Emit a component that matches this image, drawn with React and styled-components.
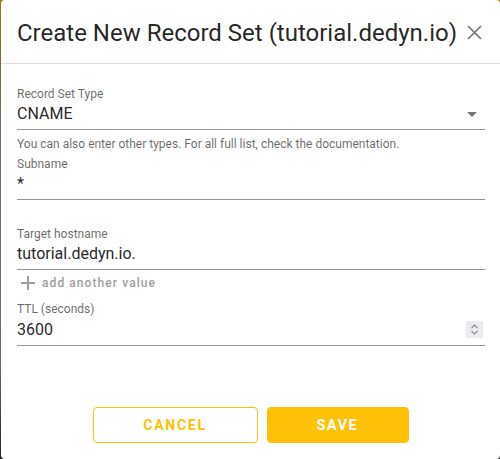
import React from 'react'
import styled, { createGlobalStyle } from 'styled-components'

// Colours
const amber = '#ffc107'
const textPrimary = 'rgba(0, 0, 0, 0.87)'
const textSecondary = 'rgba(0, 0, 0, 0.6)'

const GlobalStyle = createGlobalStyle`
    html, body {
        margin: 0;
        padding: 0;
        background: #ffffff;
    }
    body {
        font-family: Roboto, "Liberation Sans", sans-serif;
        -webkit-font-smoothing: antialiased;
    }
`

// Styled components
const Backdrop = styled.div`
    width: 500px;
    height: 459px;
    display: flex;
    background: linear-gradient(180deg, #a57a12 0%, #8a6a20 12%, #6f6f6f 30%, #6a6a6a 80%, #222 100%);
`
const Card = styled.div`
    margin-left: 1px;
    flex: 1;
    height: 459px;
    background: #ffffff;
    border-radius: 4px;
    display: flex;
    flex-direction: column;
    overflow: hidden;
`
const Header = styled.div`
    height: 64px;
    display: flex;
    flex-direction: row;
    align-items: center;
    justify-content: space-between;
    padding: 2px 14px 0 16px;
    box-sizing: border-box;
    border-bottom: 1px solid #e0e0e0;
`
const Title = styled.h2`
    margin: 0;
    font-size: 24px;
    font-weight: 400;
    color: ${textPrimary};
    line-height: 32px;
    white-space: nowrap;
`
const CloseButton = styled.button`
    width: 24px;
    height: 24px;
    border: none;
    background: transparent;
    padding: 0;
    display: flex;
    align-items: center;
    justify-content: center;
    color: rgba(0, 0, 0, 0.54);
`
const Body = styled.div`
    padding: 22px 15px 0 16px;
    display: flex;
    flex-direction: column;
    flex: 1;
`
const Field = styled.div`
    display: flex;
    flex-direction: column;
    margin-bottom: ${(props) => props.gap || 0}px;
`
const Label = styled.label`
    font-size: 12px;
    line-height: 16px;
    color: ${textSecondary};
`
const InputRow = styled.div`
    height: ${(props) => props.tall || 24}px;
    padding-bottom: 3px;
    display: flex;
    flex-direction: row;
    align-items: center;
    justify-content: space-between;
    border-bottom: 1px solid rgba(0, 0, 0, 0.42);
`
const Value = styled.span`
    font-size: 16px;
    line-height: 24px;
    color: ${textPrimary};
`
const Hint = styled.div`
    font-size: 12px;
    line-height: 14px;
    color: ${textSecondary};
    margin-top: 7px;
    margin-bottom: 5px;
`
const Caret = styled.span`
    width: 0;
    height: 0;
    margin-right: 8px;
    border-left: 5px solid transparent;
    border-right: 5px solid transparent;
    border-top: 5px solid rgba(0, 0, 0, 0.54);
`
const Spinner = styled.div`
    width: 17px;
    height: 17px;
    margin-right: 2px;
    background: #ececf0;
    display: flex;
    align-items: center;
    justify-content: center;
`
const AddValue = styled.button`
    align-self: flex-start;
    display: flex;
    align-items: center;
    gap: 7px;
    height: 14px;
    margin: 6px 0 11px 4px;
    padding: 0;
    border: none;
    background: transparent;
    font-family: Roboto, "Liberation Sans", sans-serif;
    font-size: 12px;
    font-weight: 500;
    letter-spacing: 0.09em;
    color: #9e9e9e;
`
const Actions = styled.div`
    display: flex;
    flex-direction: row;
    justify-content: center;
    gap: 9px;
    padding-bottom: 16px;
`
const ActionButton = styled.button`
    width: ${(props) => props.width}px;
    height: 36px;
    box-sizing: border-box;
    border-radius: 4px;
    border: 1px solid ${amber};
    background: ${(props) => (props.primary ? amber : '#ffffff')};
    color: ${(props) => (props.primary ? '#ffffff' : amber)};
    font-family: Roboto, "Liberation Sans", sans-serif;
    font-size: 14px;
    font-weight: 700;
    letter-spacing: 0.125em;
    text-transform: uppercase;
`

const App = () => {
    return (
        <>
            <GlobalStyle />
            <Backdrop>
                <Card>
                    <Header>
                        <Title>Create New Record Set (tutorial.dedyn.io)</Title>
                        <CloseButton aria-label="close">
                            <svg width="15" height="15" viewBox="0 0 15 15">
                                <path d="M1 1 L14 14 M14 1 L1 14" stroke="currentColor" strokeWidth="1.7" />
                            </svg>
                        </CloseButton>
                    </Header>

                    <Body>
                        <Field>
                            <Label>Record Set Type</Label>
                            <InputRow>
                                <Value>CNAME</Value>
                                <Caret />
                            </InputRow>
                            <Hint>You can also enter other types. For all full list, check the documentation.</Hint>
                        </Field>

                        <Field gap={26}>
                            <Label>Subname</Label>
                            <InputRow>
                                <Value>*</Value>
                            </InputRow>
                        </Field>

                        <Field>
                            <Label>Target hostname</Label>
                            <InputRow>
                                <Value>tutorial.dedyn.io.</Value>
                            </InputRow>
                        </Field>

                        <AddValue>
                            <svg width="14" height="14" viewBox="0 0 14 14">
                                <path d="M7 0 V14 M0 7 H14" stroke="#9e9e9e" strokeWidth="2" />
                            </svg>
                            add another value
                        </AddValue>

                        <Field>
                            <Label>TTL (seconds)</Label>
                            <InputRow tall={25}>
                                <Value>3600</Value>
                                <Spinner>
                                    <svg width="9" height="13" viewBox="0 0 9 13">
                                        <path d="M1.5 5 L4.5 2 L7.5 5 M1.5 8 L4.5 11 L7.5 8" stroke="#8a8a8a" strokeWidth="1.1" fill="none" />
                                    </svg>
                                </Spinner>
                            </InputRow>
                        </Field>
                    </Body>

                    <Actions>
                        <ActionButton width={165}>Cancel</ActionButton>
                        <ActionButton width={142} primary>
                            Save
                        </ActionButton>
                    </Actions>
                </Card>
            </Backdrop>
        </>
    )
}

export default App
